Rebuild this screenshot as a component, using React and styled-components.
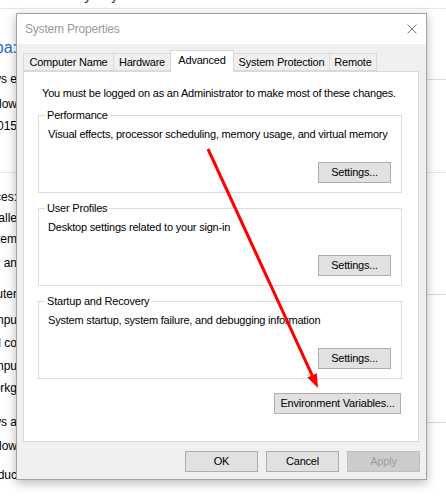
import React from "react";
import styled, { createGlobalStyle } from "styled-components";

const GlobalStyle = createGlobalStyle`
  html, body {
    margin: 0;
    padding: 0;
    background: #ffffff;
  }
  body {
    font-family: "Liberation Sans", Arial, sans-serif;
    font-size: 11px;
    letter-spacing: -0.2px;
    color: #000000;
  }
`;

const Desktop = styled.div`
  position: relative;
  width: 446px;
  height: 496px;
  overflow: hidden;
  background: #ffffff;
`;

/* control panel window behind the dialog */
const BackWindow = styled.div`
  display: flex;
  flex-direction: column;
  width: 100%;
`;

const Crumbs = styled.div`
  width: 146px;
  height: 20px;
  margin-top: -12px;
  line-height: 16px;
  font-size: 13px;
  letter-spacing: 0;
  color: #222;
  white-space: nowrap;
  display: flex;
  justify-content: flex-end;
  overflow: hidden;
`;

const FullRule = styled.div`
  height: 1px;
  background: #e5e5e5;
  margin-top: ${p => p.$top || 0}px;
`;

const BackRow = styled.div`
  display: flex;
  align-items: center;
  height: 16px;
  margin-top: ${p => p.$top}px;
`;

const Fragment = styled.div`
  width: 17px;
  flex: none;
  overflow: hidden;
  display: flex;
  justify-content: flex-end;
  white-space: nowrap;
  font-size: ${p => (p.$heading ? "16px" : "12px")};
  letter-spacing: 0;
  color: ${p => (p.$heading ? "#1e6ec8" : "#000")};
`;

const SideRule = styled.div`
  flex: 1;
  height: 1px;
  background: ${p => (p.$on ? "#dadada" : "transparent")};
`;

/* the dialog */
const Dialog = styled.div`
  position: absolute;
  left: 16px;
  top: 13px;
  width: 411px;
  height: 467px;
  box-sizing: border-box;
  border: 1px solid #a3a3a3;
  background: #f0f0f0;
  box-shadow: 0 3px 10px rgba(0, 0, 0, 0.28);
  display: flex;
  flex-direction: column;
`;

const TitleBar = styled.div`
  height: 30px;
  flex: none;
  background: #ffffff;
  display: flex;
  align-items: center;
  justify-content: space-between;
  padding: 0 9px 0 8px;
`;

const Title = styled.span`
  color: #9a9a9a;
  font-size: 12px;
`;

const CloseBox = styled.svg`
  width: 10px;
  height: 10px;
  display: block;
`;

const Body = styled.div`
  flex: 1;
  display: flex;
  flex-direction: column;
  padding: 6px 6px 0 6px;
`;

const TabStrip = styled.div`
  display: flex;
  align-items: flex-end;
  height: 21px;
  position: relative;
  z-index: 1;
`;

const Tab = styled.div`
  box-sizing: border-box;
  width: ${p => p.$w}px;
  height: ${p => (p.$active ? 22 : 18)}px;
  margin-bottom: ${p => (p.$active ? -1 : 0)}px;
  margin-left: ${p => (p.$first ? 0 : -1)}px;
  border: 1px solid #d9d9d9;
  border-bottom: ${p => (p.$active ? "none" : "1px solid #d9d9d9")};
  background: ${p => (p.$active ? "#ffffff" : "#f0f0f0")};
  display: flex;
  align-items: center;
  justify-content: center;
  padding-bottom: ${p => (p.$active ? 3 : 0)}px;
  white-space: nowrap;
`;

const Panel = styled.div`
  box-sizing: border-box;
  width: 396px;
  height: 371px;
  border: 1px solid #d9d9d9;
  background: #ffffff;
  display: flex;
  flex-direction: column;
  padding: 13px 16px 0 14px;
`;

const Info = styled.div`
  line-height: 16px;
  padding-left: 4px;
  white-space: nowrap;
`;

const Group = styled.div`
  position: relative;
  box-sizing: border-box;
  height: 78px;
  margin-top: ${p => p.$top}px;
  border: 1px solid #dcdcdc;
  display: flex;
  flex-direction: column;
  padding: 10px 10px 9px 9px;
`;

const GroupLabel = styled.span`
  position: absolute;
  top: -9px;
  left: 6px;
  padding: 0 2px;
  background: #ffffff;
  line-height: 16px;
`;

const GroupText = styled.div`
  line-height: 16px;
  white-space: nowrap;
`;

const Button = styled.button`
  box-sizing: border-box;
  width: ${p => p.$w}px;
  height: 21px;
  margin: 0;
  padding: 0;
  border: 1px solid ${p => (p.disabled ? "#bfbfbf" : "#adadad")};
  background: ${p => (p.disabled ? "#cccccc" : "#e1e1e1")};
  color: ${p => (p.disabled ? "#9d9d9d" : "#000000")};
  font-family: inherit;
  font-size: 11px;
  letter-spacing: -0.2px;
  line-height: 19px;
  white-space: nowrap;
`;

const GroupActions = styled.div`
  margin-top: auto;
  display: flex;
  justify-content: flex-end;
`;

const PanelActions = styled.div`
  margin-top: 14px;
  display: flex;
  justify-content: flex-end;
  padding-right: 1px;
`;

const Footer = styled.div`
  display: flex;
  justify-content: flex-end;
  gap: 8px;
  margin-top: 9px;
`;

const Arrow = styled.svg`
  position: absolute;
  left: 0;
  top: 0;
  width: 446px;
  height: 496px;
  pointer-events: none;
`;

const backRows = [
  { text: "View ba:", y: 48, heading: true },
  { text: "Windows e", y: 79, rule: true },
  { text: "Window", y: 104 },
  { text: "© 2015", y: 126 },
  { text: "Devices:", y: 197, divider: 172 },
  { text: "Installe", y: 218 },
  { text: "Sys tem", y: 239 },
  { text: "Pen an", y: 263 },
  { text: "Computer", y: 294, rule: true },
  { text: "Compu", y: 320 },
  { text: "Full co", y: 343 },
  { text: "Compu", y: 366 },
  { text: "Workg", y: 388 },
  { text: "Windows a", y: 422, rule: true },
  { text: "Window", y: 446 },
  { text: "Produc", y: 475 },
];

const tabs = [
  { label: "Computer Name", w: 91 },
  { label: "Hardware", w: 58 },
  { label: "Advanced", w: 64, active: true },
  { label: "System Protection", w: 97 },
  { label: "Remote", w: 48 },
];

const groups = [
  { label: "Performance", text: "Visual effects, processor scheduling, memory usage, and virtual memory", top: 14 },
  { label: "User Profiles", text: "Desktop settings related to your sign-in", top: 15 },
  { label: "Startup and Recovery", text: "System startup, system failure, and debugging information", top: 15 },
];

function Background() {
  let prev = 9;
  return (
    <BackWindow>
      <Crumbs>System and Security  ›  System</Crumbs>
      <FullRule />
      {backRows.map((r, i) => {
        let divider = null;
        if (r.divider) {
          divider = <FullRule $top={r.divider - prev} />;
          prev = r.divider + 1;
        }
        const top = r.y - 8 - prev;
        prev = r.y + 8;
        return (
          <React.Fragment key={i}>
            {divider}
            <BackRow $top={top}>
              <Fragment $heading={r.heading}>{r.text}</Fragment>
              <SideRule $on={r.rule} />
            </BackRow>
          </React.Fragment>
        );
      })}
    </BackWindow>
  );
}

export default function App() {
  return (
    <>
      <GlobalStyle />
      <Desktop>
        <Background />
        <Dialog>
          <TitleBar>
            <Title>System Properties</Title>
            <CloseBox viewBox="0 0 10 10">
              <path d="M0.5 0.5 L9.5 9.5 M9.5 0.5 L0.5 9.5" stroke="#7a7a7a" strokeWidth="1" />
            </CloseBox>
          </TitleBar>
          <Body>
            <TabStrip>
              {tabs.map((t, i) => (
                <Tab key={t.label} $w={t.w} $active={t.active} $first={i === 0}>
                  {t.label}
                </Tab>
              ))}
            </TabStrip>
            <Panel>
              <Info>You must be logged on as an Administrator to make most of these changes.</Info>
              {groups.map(g => (
                <Group key={g.label} $top={g.top}>
                  <GroupLabel>{g.label}</GroupLabel>
                  <GroupText>{g.text}</GroupText>
                  <GroupActions>
                    <Button $w={73}>Settings...</Button>
                  </GroupActions>
                </Group>
              ))}
              <PanelActions>
                <Button $w={127}>Environment Variables...</Button>
              </PanelActions>
            </Panel>
            <Footer>
              <Button $w={73}>OK</Button>
              <Button $w={73}>Cancel</Button>
              <Button $w={73} disabled>Apply</Button>
            </Footer>
          </Body>
        </Dialog>
        <Arrow viewBox="0 0 446 496">
          <line x1="208" y1="149" x2="312.4" y2="375.8" stroke="#ff0000" strokeWidth="3" />
          <polygon points="318,388 307.4,377.6 316.8,373.2" fill="#ff0000" />
        </Arrow>
      </Desktop>
    </>
  );
}
